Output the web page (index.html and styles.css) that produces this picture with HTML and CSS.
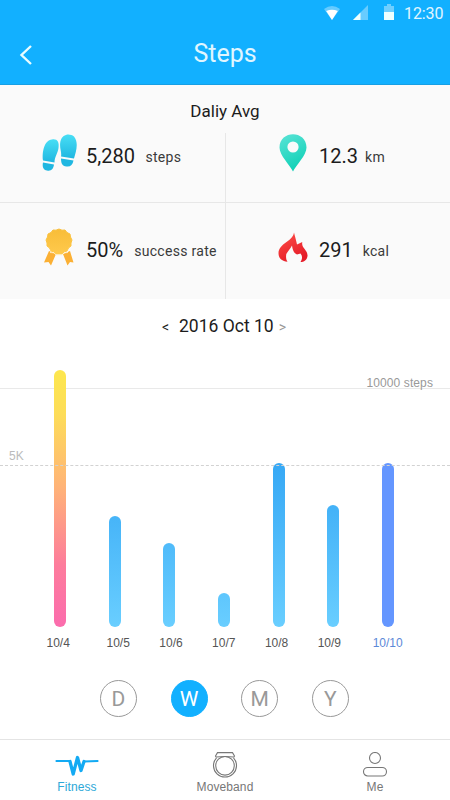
FILE: index.html
```html
<!DOCTYPE html>
<html lang="en">
<head>
<meta charset="utf-8">
<title>Steps</title>
<link rel="stylesheet" href="styles.css">
</head>
<body>
<header class="header">
  <div class="status">
    <svg class="wifi" width="16" height="14" viewBox="0 0 16 14"><path d="M0 3Q8-3 16 3L8 14Z" fill="#65cbff"/><path d="M2.200 5Q8 2.300 13.800 5L8 14Z" fill="#fff"/></svg>
    <svg class="signal" width="15" height="15" viewBox="0 0 15 15"><path d="M0 15L15 0V15Z" fill="#68ccff"/><path d="M0 15L7.500 7.500V15Z" fill="#efffff"/></svg>
    <svg class="battery" width="10" height="16" viewBox="0 0 10 16"><path d="M0 2H3V0H7V2H10V8H0Z" fill="#70cfff"/><path d="M0 8H10V16H0Z" fill="#efffff"/></svg>
    <span class="clock">12:30</span>
  </div>
  <div class="titlebar">
    <svg class="back" width="14" height="22" viewBox="0 0 14 22"><path d="M12 2L2.500 11L12 20" fill="none" stroke="#e9fcff" stroke-width="2.400"/></svg>
    <h1 class="title">Steps</h1>
  </div>
</header>
<section class="summary">
  <h2 class="summary-title">Daliy Avg</h2>
  <div class="stats">
    <div class="stat">
      <svg class="stat-icon" width="36" height="40" viewBox="0 0 36 40">
        <defs><linearGradient id="foot" x2="0" y2="1"><stop stop-color="#48def5"/><stop offset="1" stop-color="#20b7e1"/></linearGradient></defs>
        <path d="M1 27.500C0 19 2 7.500 10 6.500C15 5.500 17.500 9 16.500 15C16 20 12.500 24 12.500 29.500Z" fill="url(#foot)"/>
        <path d="M1 29.500L12 31.500C11.500 36 9 38.500 5 37.500C1.500 37 0 34 1 29.500Z" fill="#20b7e1"/>
        <path d="M19 23.500C20 19 17 15 18.500 8C20.500 1 27.500 0 32 3.500C37 9.500 34 19 32 25.500Z" fill="url(#foot)"/>
        <path d="M19 25.500L31.500 27.500C30.500 32 28.500 34 24.500 33.500C20 33 19 30 19 25.500Z" fill="#20b7e1"/>
      </svg>
      <span class="value">5,280</span><span class="unit wide">steps</span>
    </div>
    <div class="stat right">
      <svg class="stat-icon" width="36" height="40" viewBox="0 0 36 40">
        <defs><linearGradient id="pin" x2=".4" y2="1"><stop stop-color="#5ce4d7"/><stop offset="1" stop-color="#12d1b7"/></linearGradient></defs>
        <path fill="url(#pin)" fill-rule="evenodd" d="M18 38.500C15 32 4.500 22.500 4.500 14.500C4.500-3.300 31.500-3.300 31.500 14.500C31.500 22.500 21 32 18 38.500ZM18 8.400A5.600 5.600 0 1 0 18 19.600A5.600 5.600 0 1 0 18 8.400Z"/>
      </svg>
      <span class="value dist">12.3</span><span class="unit near">km</span>
    </div>
    <div class="stat lower">
      <svg class="stat-icon" width="36" height="40" viewBox="0 0 36 40">
        <defs><linearGradient id="medal" x2="0" y2="1"><stop stop-color="#f8bd38"/><stop offset="1" stop-color="#ffc94c"/></linearGradient></defs>
        <path d="M7 24L14 27L9 38.500L6.500 35L2 35.500ZM28 24L21 27L25.500 38.500L28 35L31.500 35.500Z" fill="#fbb034"/>
        <path d="M17 2L20 3.200L23 3L25 5.500L28 7L28.500 10L30 13L29 16L29 19L26.500 21L25 24L22 25L20 27H14L12 25L9 24L7.500 21L5 19L5 16L4 13L5.500 10L6 7L9 5.500L11 3L14 3.200Z" fill="url(#medal)" stroke="url(#medal)" stroke-width="1" stroke-linejoin="round"/>
        <path d="M8 25.500L12 25.800L14 28H20L22 25.800L26 25.500" fill="none" stroke="#fff2d4" stroke-width=".8"/>
      </svg>
      <span class="value">50%</span><span class="unit rate">success rate</span>
    </div>
    <div class="stat right lower">
      <svg class="stat-icon" width="36" height="40" viewBox="0 0 36 40">
        <defs><linearGradient id="fire" x2=".5" y2="1"><stop stop-color="#ff5149"/><stop offset="1" stop-color="#e51c28"/></linearGradient></defs>
        <path fill="url(#fire)" d="M19 5.500C20 9.500 21 13 22 17.500L27.300 15C26 21 33 23 32.500 29C32 33 29 35 25.500 35C28 31 27 28.500 25.500 26.500L22 27.500C18.500 26 17.500 22 17 18.500C15 22 13 24 11.300 27C10.600 31 11.500 33 12.500 34.800C7 34 3.500 31.500 3.500 26C4 16 17.500 15 19 5.500Z"/>
      </svg>
      <span class="value kcal">291</span><span class="unit burn">kcal</span>
    </div>
  </div>
</section>
<main class="history">
  <div class="date"><span class="arrow">&lt;</span><span>2016 Oct 10</span><span class="arrow next">&gt;</span></div>
  <div class="chart">
    <div class="goal-line"><span class="goal-label">10000 steps</span></div>
    <div class="bars">
      <i class="bar best" style="height:257px"></i>
      <i class="bar" style="height:111px"></i>
      <i class="bar" style="height:84px"></i>
      <i class="bar" style="height:34px"></i>
      <i class="bar" style="height:164px"></i>
      <i class="bar" style="height:122px"></i>
      <i class="bar today" style="height:164px"></i>
    </div>
    <div class="mid-line"><span class="mid-label">5K</span></div>
  </div>
  <div class="days"><span class="first">10/4</span><span>10/5</span><span>10/6</span><span>10/7</span><span>10/8</span><span>10/9</span><span class="current">10/10</span></div>
  <div class="ranges"><span class="range">D</span><span class="range active">W</span><span class="range">M</span><span class="range">Y</span></div>
</main>
<nav class="tabs">
  <div class="tab selected">
    <svg width="44" height="28" viewBox="0 0 44 28" fill="none" stroke="#13aaf3" stroke-linecap="round" stroke-linejoin="round"><path d="M1.500 9H15M29 9.500L42.500 9" stroke-width="2.200"/><path d="M15 9.500L18.200 22L22.500 5.500L26 18.500L29 9.500" stroke-width="3.300"/></svg>
    <span>Fitness</span>
  </div>
  <div class="tab">
    <svg width="28" height="28" viewBox="0 0 28 28" fill="none" stroke="#777" stroke-width="1.100"><circle cx="14" cy="13.800" r="9.300"/><path d="M5.500 5.800A11.500 11.500 0 1 0 22.500 5.800M5 5L4.500 4L6.500 .6H21.500L23.500 4L23 5Q14 4 5 5Z"/></svg>
    <span>Moveband</span>
  </div>
  <div class="tab">
    <svg width="28" height="28" viewBox="0 0 28 28" fill="none" stroke="#777" stroke-width="1.100"><circle cx="14" cy="6" r="5.500"/><rect x="2.500" y="15.500" width="23" height="8.500" rx="4.250"/></svg>
    <span>Me</span>
  </div>
</nav>
</body>
</html>
```

FILE: styles.css
```css
* { box-sizing: border-box; }
body {
  margin: 0;
  width: 450px;
  height: 800px;
  overflow: hidden;
  background: #fff;
  color: #1c1c1c;
  font-family: Roboto, sans-serif;
  font-weight: 400;
}
svg { display: block; flex: none; }
.header { height: 85px; background: #12b0ff; border-bottom: 1px solid #179fe4; color: #e0f6ff; }
.status { display: flex; height: 26px; justify-content: flex-end; padding: 4px 7px 0 0; }
.wifi { margin: 2px 13px 0 0; }
.signal { margin: 1px 16px 0 0; }
.battery { margin-right: 10px; }
.clock { width: 39px; font-size: 16px; line-height: 19px; white-space: nowrap; letter-spacing: -.1px; }
.titlebar { display: grid; grid-template-columns: 34px 1fr 34px; height: 54px; }
.back { margin: 18px 0 0 19px; }
.title { margin: 12px 0 0; text-align: center; font-size: 25px; font-weight: 400; line-height: 31px; }
.summary { height: 214px; padding-top: 15px; background: #fafafa; }
.summary-title { margin: 0; text-align: center; font-size: 17px; font-weight: 400; line-height: 22px; }
.stats { display: grid; grid-template-columns: 226px 224px; grid-template-rows: 70px 96px; margin-top: 11px; height: 166px; }
.stat { display: flex; align-items: flex-start; padding: 0 0 0 42px; border-bottom: 1px solid #e7e7e7; border-right: 1px solid #e7e7e7; height: 70px; }
.stat.right { padding-left: 49px; border-right: 0; }
.stat.lower { height: 96px; padding-top: 24px; border-bottom: 0; }
.value { margin: 11px 0 0 8px; font-size: 20px; line-height: 24px; }
.unit { margin-top: 14px; color: #3a3a3a; font-size: 14px; line-height: 20px; letter-spacing: .3px; white-space: nowrap; }
.wide { margin-left: 10.500px; }
.near { margin-left: 7px; }
.rate { margin-left: 11px; }
.burn { margin-left: 10px; }
.history { height: 440px; }
.date { display: flex; height: 70px; padding: 16px 0 0 162px; font-size: 17.500px; line-height: 23px; }
.arrow { width: 17px; font-size: 14px; line-height: 24px; }
.arrow.next { margin-left: 5px; color: #999; }
.chart { position: relative; height: 258px; }
.goal-line, .mid-line { position: absolute; left: 0; right: 0; top: 19px; border-top: 1px solid #e9e9e9; }
.mid-line { top: 96px; border-top: 1px dashed #d2d2d2; }
.goal-label, .mid-label { position: absolute; right: 17px; bottom: -2px; color: #999; font: 12px/16px "Liberation Sans", sans-serif; letter-spacing: .1px; white-space: nowrap; }
.mid-label { right: auto; left: 9px; bottom: 2px; color: #bbb; }
.bars { position: relative; display: flex; height: 258px; justify-content: space-between; align-items: flex-end; padding: 0 56px 0 54px; }
.bar { width: 12px; border-radius: 6px; background: linear-gradient(to top, #69ceff, #36a8f5 164px); }
.bar.best { background: linear-gradient(#fde74e, #fddd58 17%, #ffb477 45%, #fd7c9c 76%, #fb6cad); }
.bar.today { background: #6496ff; }
.days { display: flex; height: 53px; padding: 8px 0 0 46.500px; color: #555; font: 12px/17px "Liberation Sans", sans-serif; }
.days span { width: 52.800px; }
.days .first { width: 60px; }
.days span:nth-child(6) { width: 55px; }
.days .current { color: #5c88d8; }
.ranges { display: flex; gap: 33.600px; padding-left: 100px; }
.range { width: 37px; height: 37px; border: 1px solid #999; border-radius: 50%; text-align: center; color: #999; font-size: 21px; line-height: 36px; }
.range.active { background: #12b0ff; border-color: #12b0ff; color: #fff; }
.tabs { display: grid; grid-template-columns: 154px 142px 158px; height: 61px; padding-top: 12px; border-top: 1px solid #e4e4e4; }
.tab { display: flex; flex-direction: column; align-items: center; color: #777; font: 12px/15px "Liberation Sans", sans-serif; letter-spacing: .1px; }
.tab.selected { color: #2da8d8; }
```
